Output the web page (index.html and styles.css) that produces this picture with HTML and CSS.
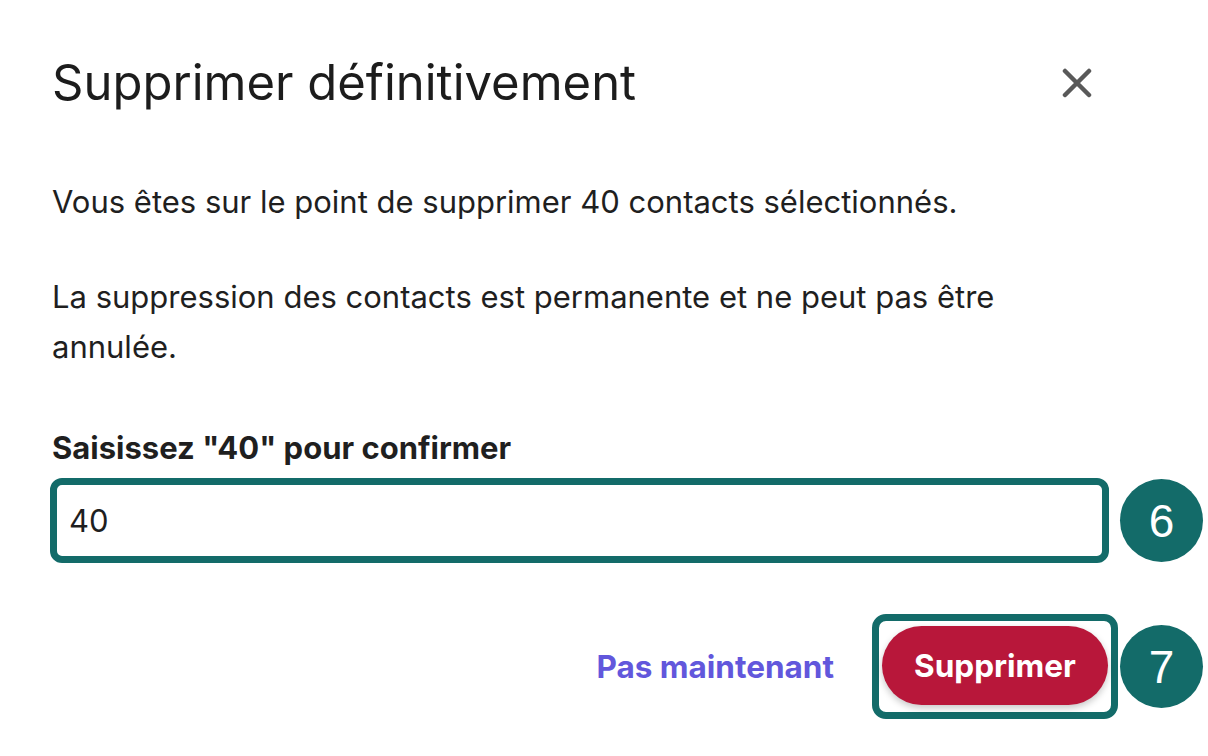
FILE: index.html
```html
<!DOCTYPE html>
<html lang="fr">
<head>
<meta charset="utf-8">
<title>Supprimer définitivement</title>
<link rel="stylesheet" href="styles.css">
</head>
<body>
<div class="dialog">
  <div class="header">
    <h1 class="title">Supprimer définitivement</h1>
    <button class="close" aria-label="Fermer">
      <svg width="30" height="30" viewBox="0 0 30 30"><path d="M3 3 L27 27 M27 3 L3 27" stroke="#595959" stroke-width="4.5" stroke-linecap="round"/></svg>
    </button>
  </div>
  <p class="text p1">Vous êtes sur le point de supprimer 40 contacts sélectionnés.</p>
  <p class="text p2">La suppression des contacts est permanente et ne peut pas être annulée.</p>
  <label class="label" for="confirm">Saisissez "40" pour confirmer</label>
  <div class="input-row">
    <input id="confirm" class="input" type="text" value="40">
    <span class="badge">6</span>
  </div>
  <div class="footer">
    <a class="link" href="#">Pas maintenant</a>
    <div class="focus-ring">
      <button class="danger">Supprimer</button>
    </div>
    <span class="badge">7</span>
  </div>
</div>
</body>
</html>
```

FILE: styles.css
```css
html, body {
  margin: 0;
  padding: 0;
  background: #ffffff;
}
body {
  font-family: Inter, "Noto Sans", sans-serif;
  color: #1f1f1f;
}
.dialog {
  width: 1153px;
  padding: 54px 0 0 50px;
}
.header {
  display: flex;
  justify-content: space-between;
  align-items: center;
  width: 1062px;
}
.title {
  margin: 0 0 0 2px;
  font-size: 49px;
  font-weight: 400;
  line-height: 58px;
  letter-spacing: 0;
  color: #1c1c1c;
}
.close {
  border: 0;
  background: none;
  padding: 0;
  width: 30px;
  height: 30px;
  margin-right: 20px;
  display: flex;
}
.text {
  margin: 0 0 0 2px;
  font-size: 31px;
  line-height: 50px;
  color: #1f1f1f;
}
.p1 {
  margin-top: 65px;
}
.p2 {
  margin-top: 45px;
  width: 1000px;
}
.label {
  display: block;
  margin: 56px 0 0 2px;
  font-size: 31px;
  font-weight: 700;
  line-height: 40px;
  color: #1f1f1f;
}
.input-row {
  margin-top: 10px;
  display: flex;
  align-items: center;
  gap: 11px;
}
.input {
  box-sizing: border-box;
  width: 1059px;
  height: 85px;
  border: 7px solid #136b69;
  border-radius: 12px;
  padding: 0 12px;
  font-family: Inter, "Noto Sans", sans-serif;
  font-size: 31px;
  color: #1f1f1f;
  outline: none;
  background: #fff;
}
.badge {
  width: 83px;
  height: 83px;
  border-radius: 50%;
  background: #136b69;
  color: #ffffff;
  display: flex;
  align-items: center;
  justify-content: center;
  font-family: "Liberation Sans", Arial, sans-serif;
  font-size: 46px;
  flex: none;
}
.footer {
  margin-top: 51px;
  display: flex;
  justify-content: flex-end;
  align-items: center;
}
.link {
  font-size: 31.5px;
  font-weight: 700;
  color: #6257dc;
  text-decoration: none;
  margin-right: 38px;
}
.focus-ring {
  border: 7px solid #136b69;
  border-radius: 14px;
  padding: 5px 3px 7px 3px;
  margin-right: 2px;
  display: flex;
}
.danger {
  width: 226px;
  height: 79px;
  border: 0;
  border-radius: 40px;
  background: #b8173a;
  color: #ffffff;
  font-family: Inter, "Noto Sans", sans-serif;
  font-size: 31.5px;
  font-weight: 700;
  box-shadow: 0 3px 7px rgba(0, 0, 0, 0.22);
  padding: 0;
}
```
